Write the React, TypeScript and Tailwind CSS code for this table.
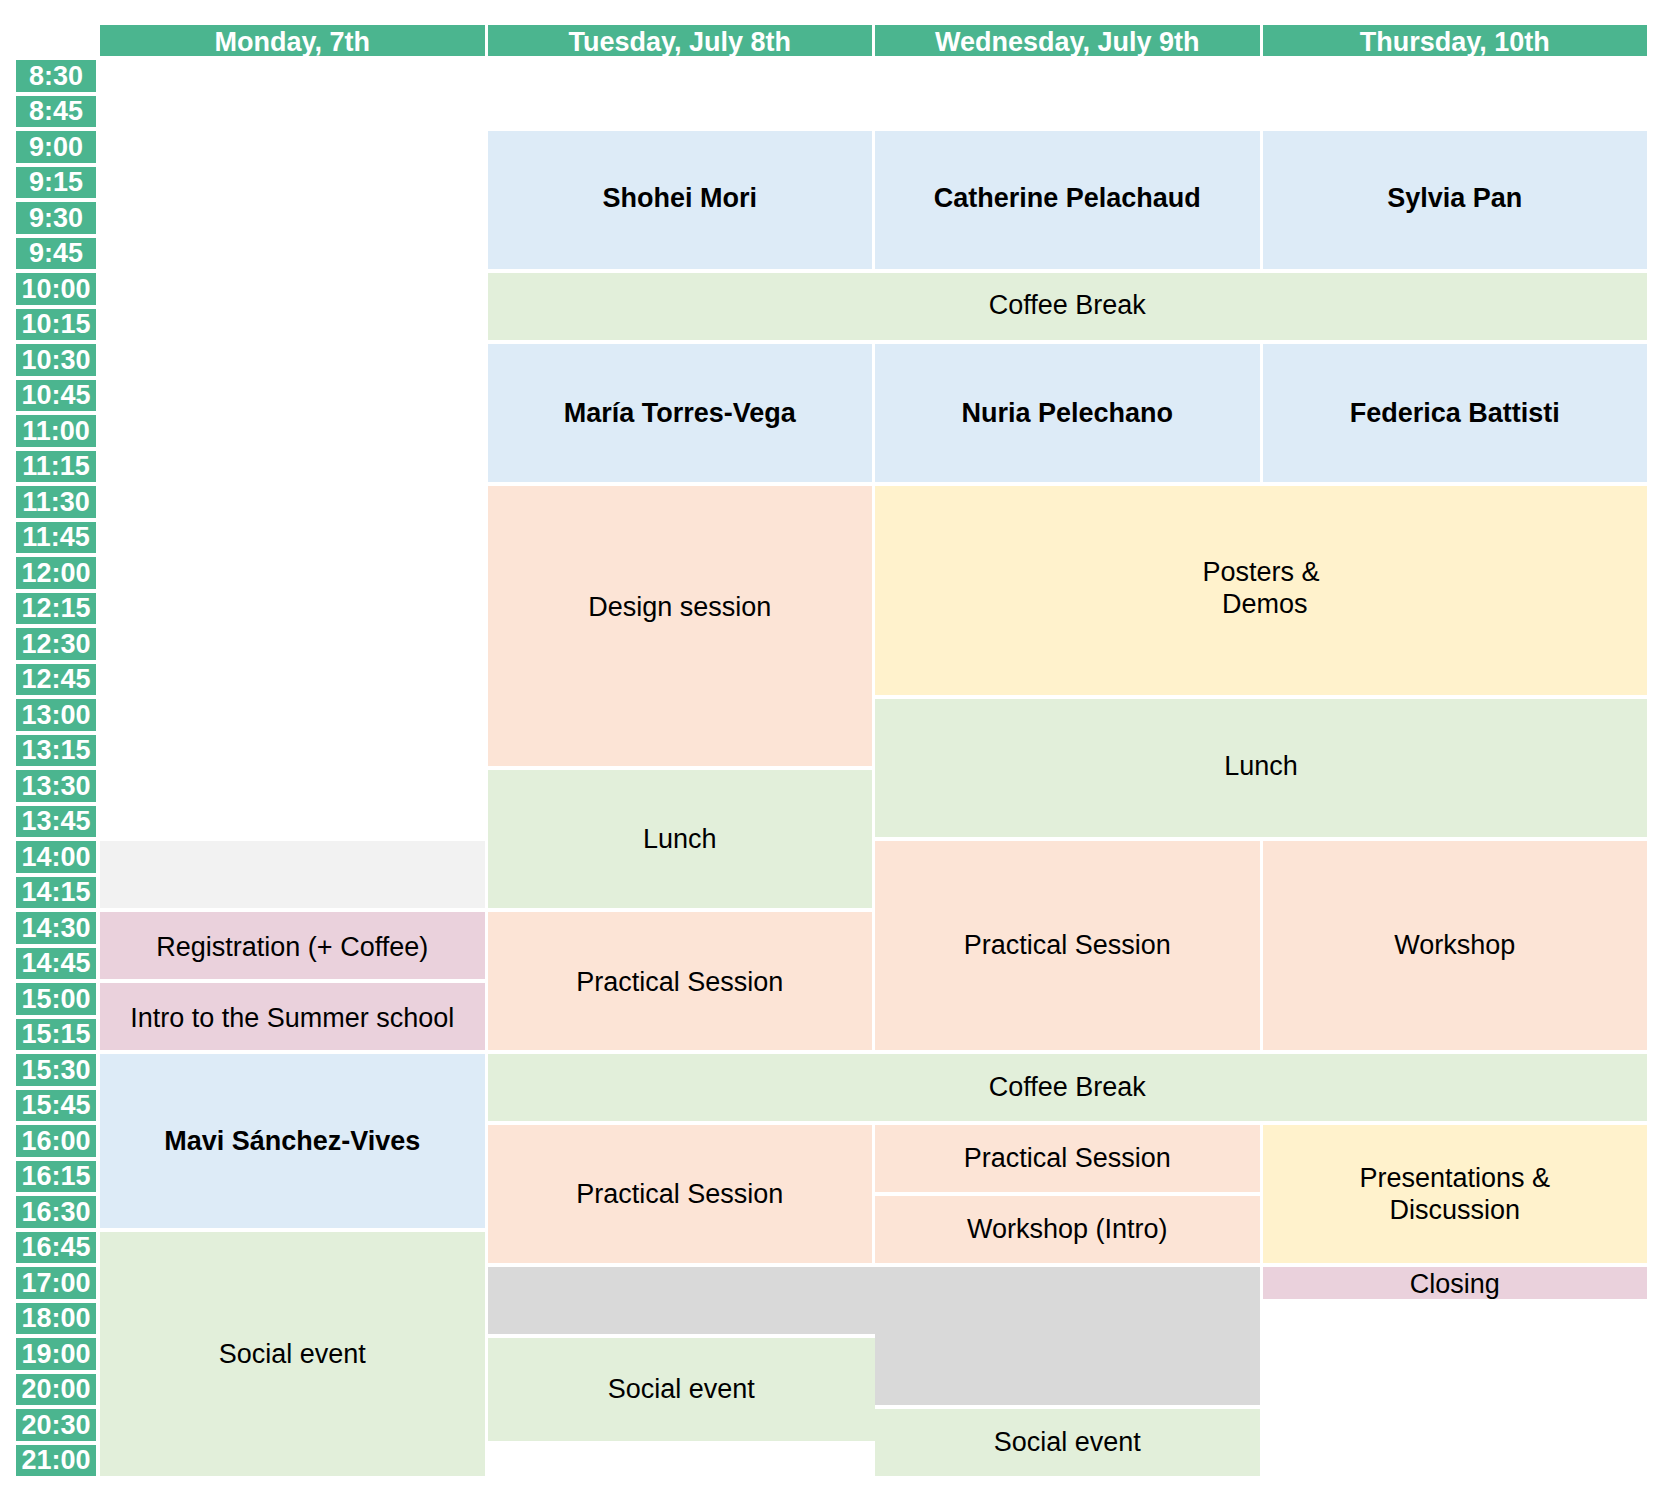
import React from "react";

const times = [
  "8:30", "8:45", "9:00", "9:15", "9:30", "9:45", "10:00", "10:15", "10:30", "10:45",
  "11:00", "11:15", "11:30", "11:45", "12:00", "12:15", "12:30", "12:45", "13:00", "13:15",
  "13:30", "13:45", "14:00", "14:15", "14:30", "14:45", "15:00", "15:15", "15:30", "15:45",
  "16:00", "16:15", "16:30", "16:45", "17:00", "18:00", "19:00", "20:00", "20:30", "21:00",
];

const days = [
  { name: "Monday, 7th", pos: "col-start-1" },
  { name: "Tuesday, July 8th", pos: "col-start-2" },
  { name: "Wednesday, July 9th", pos: "col-start-3" },
  { name: "Thursday, 10th", pos: "col-start-4" },
];

const blue = "bg-[#ddebf7]";
const green = "bg-[#e2efda]";
const orange = "bg-[#fce4d6]";
const yellow = "bg-[#fff2cc]";
const pink = "bg-[#ead1dc]";
const gray = "bg-[#d9d9d9]";

type Block = {
  text?: React.ReactNode;
  pos: string;
  color: string;
  bold?: boolean;
};

// grid rows: 1 = header, slot i sits on row i + 2
const blocks: Block[] = [
  // Monday
  { pos: "col-start-1 row-start-24 row-span-2", color: "bg-[#f2f2f2]" },
  { text: "Registration (+ Coffee)", pos: "col-start-1 row-start-26 row-span-2 pt-[4px]", color: pink },
  { text: "Intro to the Summer school", pos: "col-start-1 row-start-28 row-span-2 pt-[4px]", color: pink },
  { text: "Mavi Sánchez-Vives", pos: "col-start-1 row-start-30 row-span-5", color: blue, bold: true },
  { text: "Social event", pos: "col-start-1 row-start-35 row-span-7", color: green },

  // Tuesday
  { text: "Shohei Mori", pos: "col-start-2 row-start-4 row-span-4 pb-[3px]", color: blue, bold: true },
  { text: "Coffee Break", pos: "col-start-2 col-span-3 row-start-8 row-span-2 pb-[3px]", color: green },
  { text: "María Torres-Vega", pos: "col-start-2 row-start-10 row-span-4", color: blue, bold: true },
  { text: "Design session", pos: "col-start-2 row-start-14 row-span-8 pb-[38px]", color: orange },
  { text: "Lunch", pos: "col-start-2 row-start-22 row-span-4", color: green },
  { text: "Practical Session", pos: "col-start-2 row-start-26 row-span-4 pt-[3px]", color: orange },
  { text: "Coffee Break", pos: "col-start-2 col-span-3 row-start-30 row-span-2", color: green },
  { text: "Practical Session", pos: "col-start-2 row-start-32 row-span-4", color: orange },
  { pos: "col-start-2 row-start-36 row-span-2 -mr-[3px]", color: gray },
  { text: "Social event", pos: "col-start-2 row-start-38 row-span-3 -mr-[3px]", color: green },

  // Wednesday
  { text: "Catherine Pelachaud", pos: "col-start-3 row-start-4 row-span-4 pb-[3px]", color: blue, bold: true },
  { text: "Nuria Pelechano", pos: "col-start-3 row-start-10 row-span-4", color: blue, bold: true },
  {
    text: (
      <>
        Posters &amp;
        <br />
        {"\u00a0Demos"}
      </>
    ),
    pos: "col-start-3 col-span-2 row-start-14 row-span-6 pb-[5px]",
    color: yellow,
  },
  { text: "Lunch", pos: "col-start-3 col-span-2 row-start-20 row-span-4 pb-[4px]", color: green },
  { text: "Practical Session", pos: "col-start-3 row-start-24 row-span-6", color: orange },
  { text: "Practical Session", pos: "col-start-3 row-start-32 row-span-2", color: orange },
  { text: "Workshop (Intro)", pos: "col-start-3 row-start-34 row-span-2", color: orange },
  { pos: "col-start-3 row-start-36 row-span-4", color: gray },
  { text: "Social event", pos: "col-start-3 row-start-40 row-span-2", color: green },

  // Thursday
  { text: "Sylvia Pan", pos: "col-start-4 row-start-4 row-span-4 pb-[3px]", color: blue, bold: true },
  { text: "Federica Battisti", pos: "col-start-4 row-start-10 row-span-4", color: blue, bold: true },
  { text: "Workshop", pos: "col-start-4 row-start-24 row-span-6", color: orange },
  {
    text: (
      <>
        Presentations &amp;
        <br />
        Discussion
      </>
    ),
    pos: "col-start-4 row-start-32 row-span-4",
    color: yellow,
  },
  { text: "Closing", pos: "col-start-4 row-start-36 row-span-1 pt-[2px]", color: pink },
];

export default function App() {
  return (
    <div className="min-h-screen bg-white pl-[16px] pt-[25px] font-['Liberation_Sans',Arial,sans-serif] text-[27px] text-black">
      <div className="flex gap-x-[3px]">
        {/* time column */}
        <div className="flex w-[81px] flex-col gap-y-[4px]">
          <div className="h-[31px]" />
          {times.map((t) => (
            <div
              key={t}
              className="flex h-[31.5px] w-[80px] items-center justify-center bg-[#4bb58f] pt-[1px] font-bold leading-none text-white"
            >
              {t}
            </div>
          ))}
        </div>

        {/* days */}
        <div className="grid grid-cols-[repeat(4,384.5px)] grid-rows-[31px_repeat(40,31.5px)] gap-x-[3px] gap-y-[4px]">
          {days.map((d) => (
            <div
              key={d.name}
              className={`${d.pos} row-start-1 flex items-center justify-center bg-[#4bb58f] pt-[3px] font-bold leading-none text-white`}
            >
              {d.name}
            </div>
          ))}
          {blocks.map((b, i) => (
            <div
              key={i}
              className={`${b.pos} ${b.color} flex items-center justify-center text-center leading-[1.2] ${
                b.bold ? "font-bold" : ""
              }`}
            >
              {b.text}
            </div>
          ))}
        </div>
      </div>
    </div>
  );
}
